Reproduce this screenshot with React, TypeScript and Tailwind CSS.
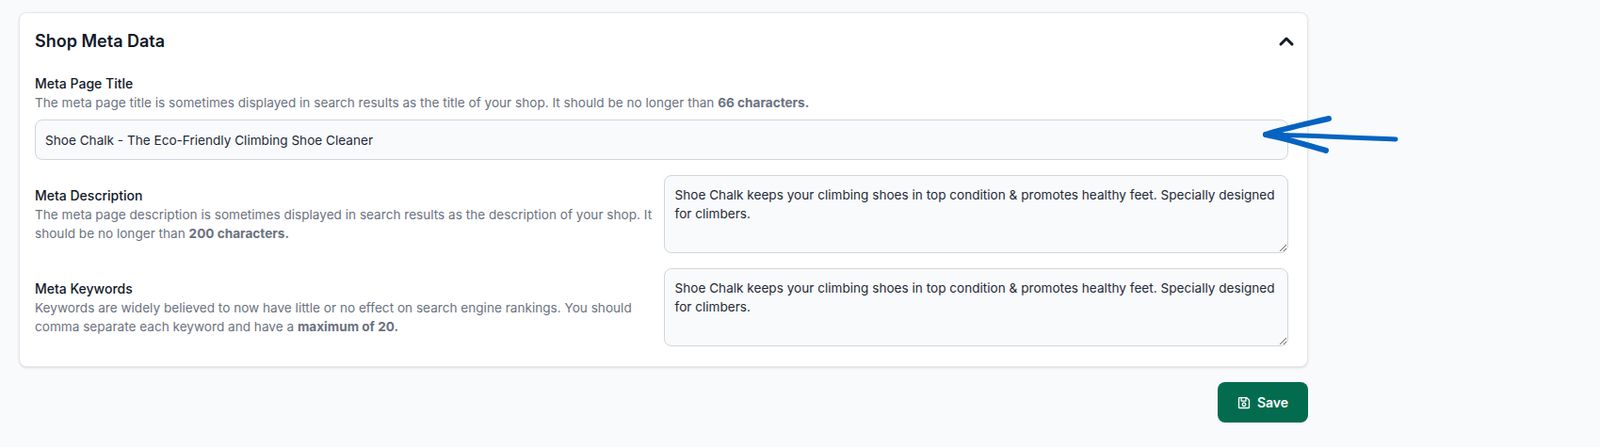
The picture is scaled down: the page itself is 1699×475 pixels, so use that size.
import { ChevronUp } from "lucide-react";
import { FaRegSave } from "react-icons/fa";

const metaText =
  "Shoe Chalk keeps your climbing shoes in top condition & promotes healthy feet. Specially designed for climbers.";

const fieldClass =
  "w-full rounded-lg border border-[#d1d5db] bg-[#f9fafb] px-[10px] text-[13.6px] text-[#1f2937] outline-none";

function TextareaRow({ label, children }: { label: string; children: React.ReactNode }) {
  return (
    <div className="grid grid-cols-[655.5px_663.5px] gap-x-3 items-center">
      <div>
        <label className="block text-[14px] leading-[20px] font-medium text-[#111827]">{label}</label>
        <p className="text-[13.6px] leading-[20.4px] text-[#6b7280]">{children}</p>
      </div>
      <textarea
        readOnly
        defaultValue={metaText}
        className={`${fieldClass} block h-[83px] py-[10px] pl-[11px] leading-[20px]`}
      />
    </div>
  );
}

export default function App() {
  return (
    <div className="relative min-h-[475px] bg-[#f9fafb] pt-[13px] pl-[20px] font-['Inter',sans-serif]">
      <div className="w-[1369px]">
        {/* card */}
        <div className="rounded-lg border border-[#e5e7eb] bg-white pl-4 pr-5 pt-[16px] pb-[21px] shadow-sm">
          <div className="flex items-center justify-between h-[28px]">
            <h2 className="text-[18px] leading-[28px] font-semibold text-[#111827]">Shop Meta Data</h2>
            <ChevronUp size={24} strokeWidth={3} className="text-[#111827] -mr-[9.5px]" />
          </div>

          <div className="mt-[21px]">
            <label className="block text-[14px] leading-[20px] font-medium text-[#111827]">Meta Page Title</label>
            <p className="text-[13.6px] leading-[20.4px] text-[#6b7280]">
              The meta page title is sometimes displayed in search results as the title of your shop. It should be no
              longer than <strong className="font-bold">66 characters.</strong>
            </p>
            <input
              readOnly
              defaultValue="Shoe Chalk - The Eco-Friendly Climbing Shoe Cleaner"
              className={`${fieldClass} mt-[8px] block h-[43px]`}
            />
          </div>

          <div className="mt-4 flex flex-col gap-4">
            <TextareaRow label="Meta Description">
              The meta page description is sometimes displayed in search results as the description of your shop. It
              should be no longer than <strong className="font-bold">200 characters.</strong>
            </TextareaRow>
            <TextareaRow label="Meta Keywords">
              Keywords are widely believed to now have little or no effect on search engine rankings. You should comma
              separate each keyword and have a <strong className="font-bold">maximum of 20.</strong>
            </TextareaRow>
          </div>
        </div>

        <div className="mt-4 flex justify-end">
          <button className="flex h-[43px] w-[96px] items-center justify-center gap-[7px] rounded-lg bg-[#046c4e] text-[14px] font-semibold text-white">
            <FaRegSave size={14} />
            Save
          </button>
        </div>
      </div>

      {/* hand-drawn arrow over the title field */}
      <svg className="absolute left-[1335px] top-[118px]" width="155" height="52" viewBox="0 0 155 52" fill="none">
        <path d="M9 25 C30 18 55 13 76 8" stroke="#0563c1" strokeWidth="6" strokeLinecap="round" />
        <path d="M9 25 C30 29 52 36 73 42" stroke="#0563c1" strokeWidth="6" strokeLinecap="round" />
        <path d="M9 25 C55 26 100 28 147 30" stroke="#0563c1" strokeWidth="5" strokeLinecap="round" />
      </svg>
    </div>
  );
}
